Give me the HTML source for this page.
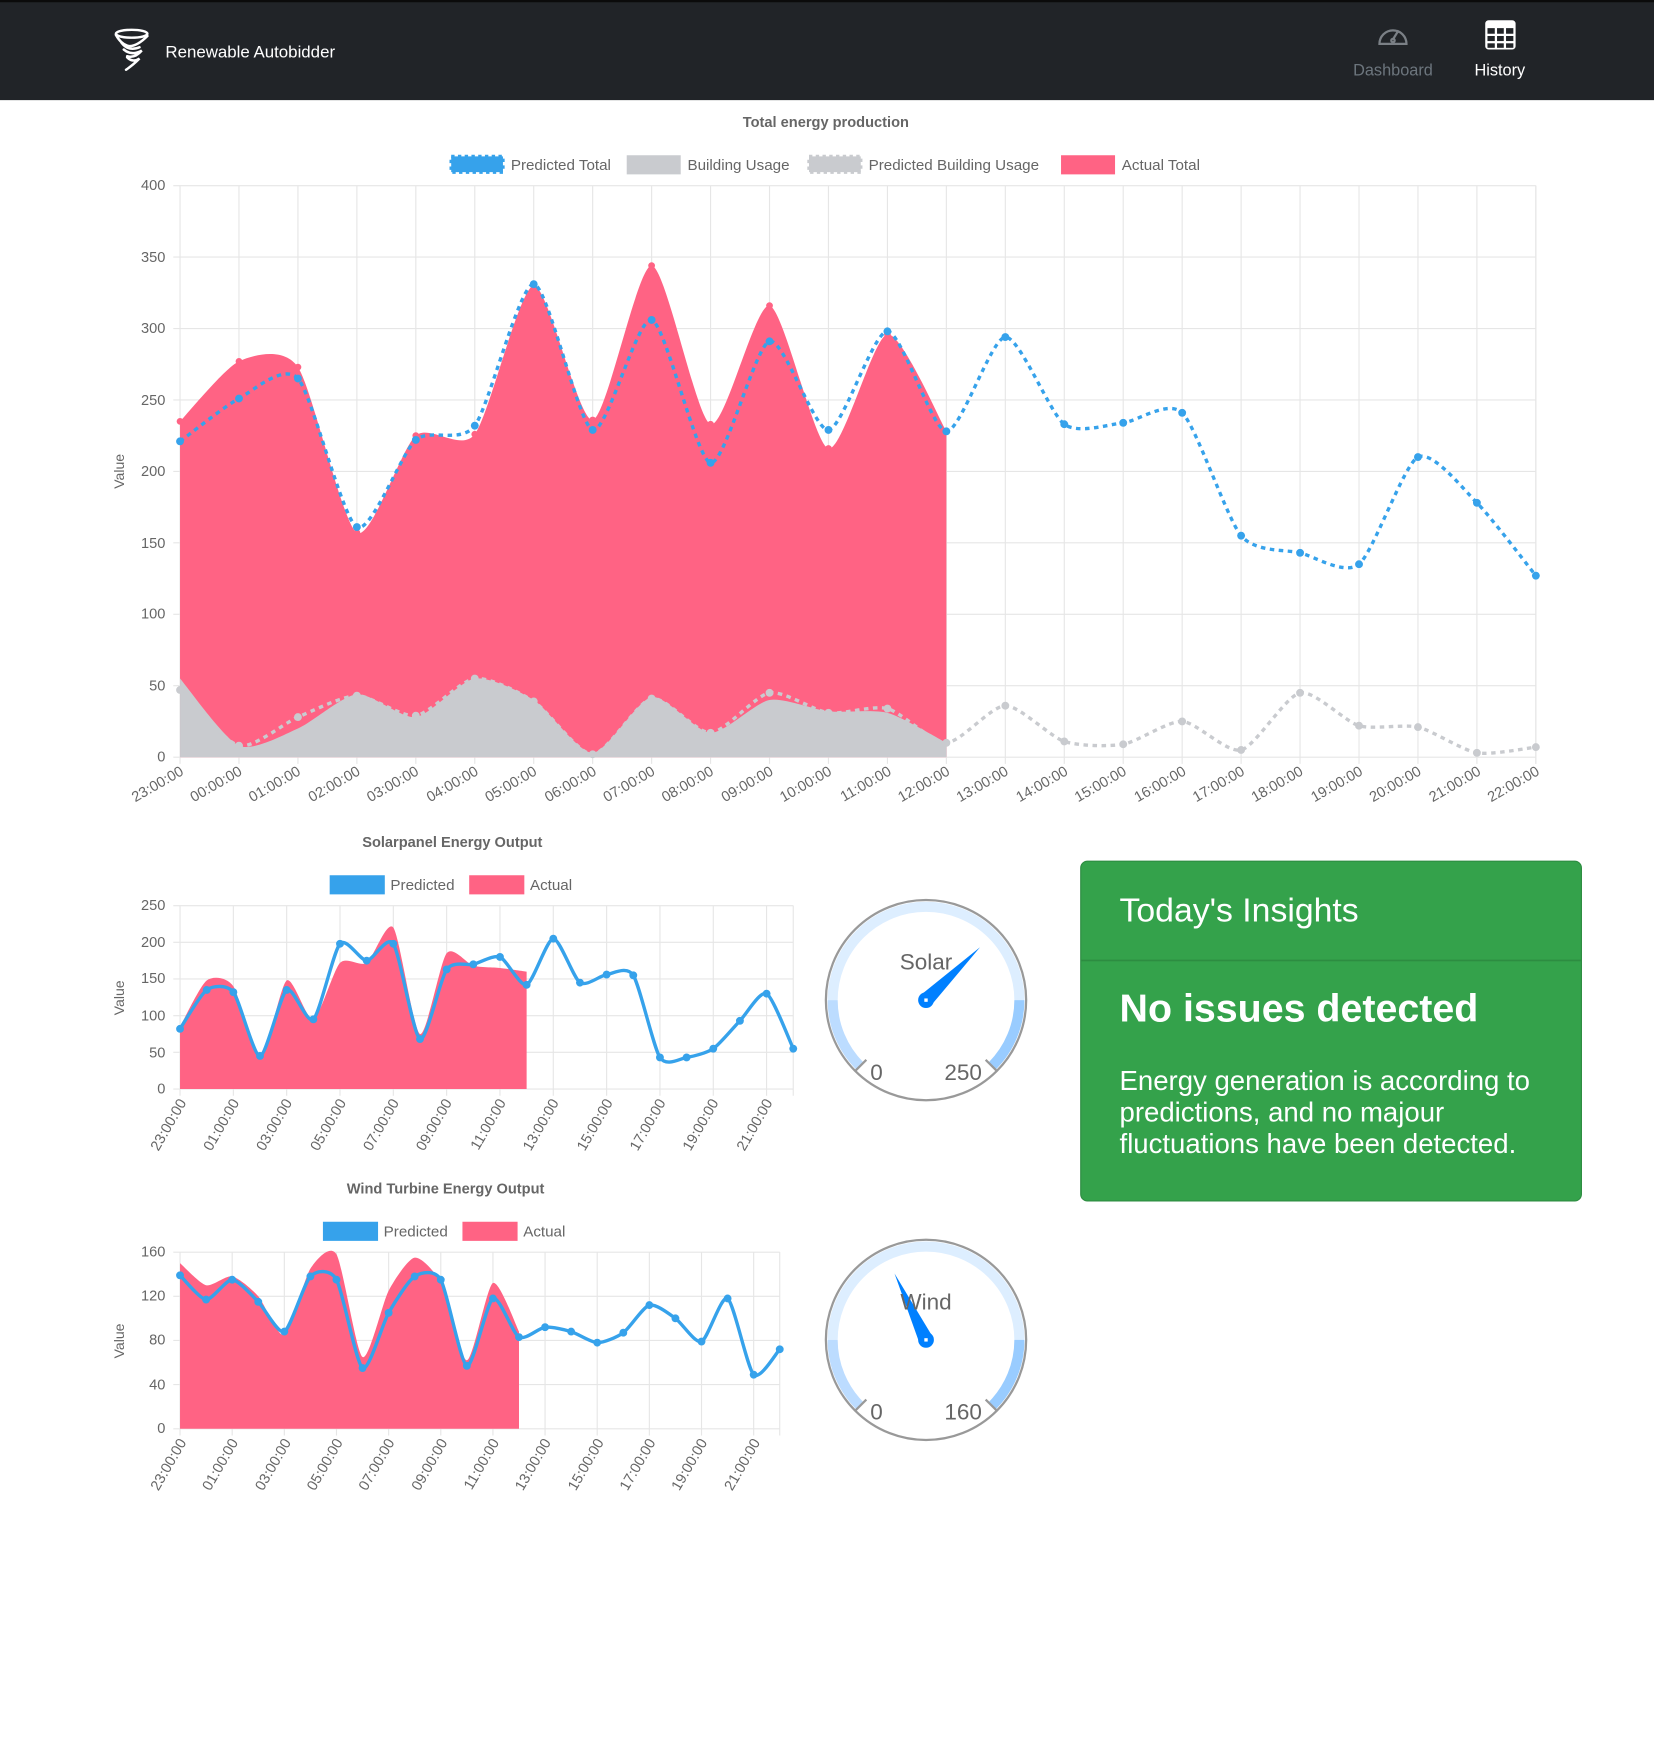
<!DOCTYPE html>
<html><head><meta charset="utf-8"><style>
html,body{margin:0;padding:0;background:#fff;width:1654px;height:1764px;overflow:hidden}
svg{display:block;font-family:"Liberation Sans",Arial,sans-serif}
</style></head><body>
<svg id="s" width="1654" height="1764" viewBox="0 0 1470 1568" preserveAspectRatio="none" xmlns="http://www.w3.org/2000/svg">
<rect x="0" y="0" width="1470" height="89" fill="#212428"/>
<rect x="0" y="0" width="1470" height="2" fill="#0b0b0b"/>
<g fill="none" stroke="#fff" stroke-width="2.2" stroke-linecap="round">
<ellipse cx="117" cy="30" rx="14" ry="3.5"/>
<path d="M103 31 Q108 40 115 41 Q122 41 131 32"/>
<path d="M108 38 Q114 46 124 42"/>
<path d="M110 44 Q117 50 126 45 Q120 52 113 50"/>
<path d="M113 51 Q118 56 124 52 Q118 58 112 62"/>
</g>
<text x="147" y="51" fill="#fff" font-size="15">Renewable Autobidder</text>
<g fill="none" stroke="#7b8086" stroke-width="2">
<path d="M1226 39 A12 12 0 1 1 1250 39 Z"/>
<path d="M1238 35 L1243 27"/><circle cx="1238" cy="36" r="1.5"/>
</g>
<text x="1238" y="67" text-anchor="middle" fill="#6c757d" font-size="14.5">Dashboard</text>
<g><rect x="1320" y="18" width="27" height="26" rx="3" fill="#fff"/>
<g fill="#212428"><rect x="1322" y="25" width="6.5" height="5"/><rect x="1330.5" y="25" width="6" height="5"/><rect x="1338.5" y="25" width="6.5" height="5"/>
<rect x="1322" y="32" width="6.5" height="4.5"/><rect x="1330.5" y="32" width="6" height="4.5"/><rect x="1338.5" y="32" width="6.5" height="4.5"/>
<rect x="1322" y="38.5" width="6.5" height="4"/><rect x="1330.5" y="38.5" width="6" height="4"/><rect x="1338.5" y="38.5" width="6.5" height="4"/></g></g>
<text x="1333" y="67" text-anchor="middle" fill="#fff" font-size="14.5">History</text>

<text x="734" y="113" text-anchor="middle" fill="#666" font-size="13" font-weight="bold">Total energy production</text>
<rect x="401" y="139" width="46" height="14" fill="#36a2eb" stroke="#36a2eb" stroke-width="3" stroke-dasharray="3,3"/>
<text x="454" y="151" fill="#666" font-size="13.5">Predicted Total</text>
<rect x="557" y="138" width="48" height="17" fill="#c9cbcf"/>
<text x="611" y="151" fill="#666" font-size="13.5">Building Usage</text>
<rect x="719" y="139" width="46" height="14" fill="#c9cbcf" stroke="#c9cbcf" stroke-width="3" stroke-dasharray="3,3"/>
<text x="772" y="151" fill="#666" font-size="13.5">Predicted Building Usage</text>
<rect x="943" y="138" width="48" height="17" fill="#ff6384"/>
<text x="997" y="151" fill="#666" font-size="13.5">Actual Total</text>
<g fill="#666" font-size="13" text-anchor="end">
<text x="147" y="169">400</text><text x="147" y="233">350</text><text x="147" y="296">300</text><text x="147" y="360">250</text><text x="147" y="423">200</text><text x="147" y="487">150</text><text x="147" y="550">100</text><text x="147" y="614">50</text><text x="147" y="677">0</text>
</g>
<text transform="translate(110,419) rotate(-90)" text-anchor="middle" fill="#666" font-size="12.5">Value</text>
<g fill="#666" font-size="13" text-anchor="end">
<text transform="translate(164,688) rotate(-30)">23:00:00</text>
<text transform="translate(216,688) rotate(-30)">00:00:00</text>
<text transform="translate(268,688) rotate(-30)">01:00:00</text>
<text transform="translate(321,688) rotate(-30)">02:00:00</text>
<text transform="translate(373,688) rotate(-30)">03:00:00</text>
<text transform="translate(426,688) rotate(-30)">04:00:00</text>
<text transform="translate(478,688) rotate(-30)">05:00:00</text>
<text transform="translate(531,688) rotate(-30)">06:00:00</text>
<text transform="translate(583,688) rotate(-30)">07:00:00</text>
<text transform="translate(635,688) rotate(-30)">08:00:00</text>
<text transform="translate(688,688) rotate(-30)">09:00:00</text>
<text transform="translate(740,688) rotate(-30)">10:00:00</text>
<text transform="translate(793,688) rotate(-30)">11:00:00</text>
<text transform="translate(845,688) rotate(-30)">12:00:00</text>
<text transform="translate(897,688) rotate(-30)">13:00:00</text>
<text transform="translate(950,688) rotate(-30)">14:00:00</text>
<text transform="translate(1002,688) rotate(-30)">15:00:00</text>
<text transform="translate(1055,688) rotate(-30)">16:00:00</text>
<text transform="translate(1107,688) rotate(-30)">17:00:00</text>
<text transform="translate(1159,688) rotate(-30)">18:00:00</text>
<text transform="translate(1212,688) rotate(-30)">19:00:00</text>
<text transform="translate(1264,688) rotate(-30)">20:00:00</text>
<text transform="translate(1317,688) rotate(-30)">21:00:00</text>
<text transform="translate(1369,688) rotate(-30)">22:00:00</text>
</g>

<text x="402" y="753" text-anchor="middle" fill="#666" font-size="13" font-weight="bold">Solarpanel Energy Output</text>
<rect x="293" y="778" width="49" height="17" fill="#36a2eb"/><text x="347" y="791" fill="#666" font-size="13.5">Predicted</text>
<rect x="417" y="778" width="49" height="17" fill="#ff6384"/><text x="471" y="791" fill="#666" font-size="13.5">Actual</text>
<g fill="#666" font-size="13" text-anchor="end">
<text x="147" y="809">250</text><text x="147" y="842">200</text><text x="147" y="874">150</text><text x="147" y="907">100</text><text x="147" y="940">50</text><text x="147" y="972">0</text>
</g>
<text transform="translate(110,887) rotate(-90)" text-anchor="middle" fill="#666" font-size="12.5">Value</text>
<g fill="#666" font-size="13" text-anchor="end">
<text transform="translate(166,980) rotate(-60)">23:00:00</text>
<text transform="translate(213,980) rotate(-60)">01:00:00</text>
<text transform="translate(260,980) rotate(-60)">03:00:00</text>
<text transform="translate(308,980) rotate(-60)">05:00:00</text>
<text transform="translate(355,980) rotate(-60)">07:00:00</text>
<text transform="translate(402,980) rotate(-60)">09:00:00</text>
<text transform="translate(450,980) rotate(-60)">11:00:00</text>
<text transform="translate(497,980) rotate(-60)">13:00:00</text>
<text transform="translate(545,980) rotate(-60)">15:00:00</text>
<text transform="translate(592,980) rotate(-60)">17:00:00</text>
<text transform="translate(639,980) rotate(-60)">19:00:00</text>
<text transform="translate(687,980) rotate(-60)">21:00:00</text>
</g>

<text x="396" y="1061" text-anchor="middle" fill="#666" font-size="13" font-weight="bold">Wind Turbine Energy Output</text>
<rect x="287" y="1086" width="49" height="17" fill="#36a2eb"/><text x="341" y="1099" fill="#666" font-size="13.5">Predicted</text>
<rect x="411" y="1086" width="49" height="17" fill="#ff6384"/><text x="465" y="1099" fill="#666" font-size="13.5">Actual</text>
<g fill="#666" font-size="13" text-anchor="end">
<text x="147" y="1117">160</text><text x="147" y="1156">120</text><text x="147" y="1195">80</text><text x="147" y="1235">40</text><text x="147" y="1274">0</text>
</g>
<text transform="translate(110,1192) rotate(-90)" text-anchor="middle" fill="#666" font-size="12.5">Value</text>
<g fill="#666" font-size="13" text-anchor="end">
<text transform="translate(166,1282) rotate(-60)">23:00:00</text>
<text transform="translate(212,1282) rotate(-60)">01:00:00</text>
<text transform="translate(259,1282) rotate(-60)">03:00:00</text>
<text transform="translate(305,1282) rotate(-60)">05:00:00</text>
<text transform="translate(351,1282) rotate(-60)">07:00:00</text>
<text transform="translate(398,1282) rotate(-60)">09:00:00</text>
<text transform="translate(444,1282) rotate(-60)">11:00:00</text>
<text transform="translate(490,1282) rotate(-60)">13:00:00</text>
<text transform="translate(537,1282) rotate(-60)">15:00:00</text>
<text transform="translate(583,1282) rotate(-60)">17:00:00</text>
<text transform="translate(629,1282) rotate(-60)">19:00:00</text>
<text transform="translate(676,1282) rotate(-60)">21:00:00</text>
</g>

<g id="dyn"></g>

<g id="g1"></g>
<text x="823" y="862" text-anchor="middle" fill="#666" font-size="20">Solar</text>
<text x="779" y="960" text-anchor="middle" fill="#666" font-size="20">0</text>
<text x="856" y="960" text-anchor="middle" fill="#666" font-size="20">250</text>
<g id="g2"></g>
<text x="823" y="1164" text-anchor="middle" fill="#666" font-size="20">Wind</text>
<text x="779" y="1262" text-anchor="middle" fill="#666" font-size="20">0</text>
<text x="856" y="1262" text-anchor="middle" fill="#666" font-size="20">160</text>

<rect x="960.5" y="765.5" width="445" height="302" rx="6" fill="#34a24b" stroke="#2d8c41"/>
<rect x="961" y="853" width="444" height="1.5" fill="#2d8c41"/>
<text x="995" y="819" fill="#fff" font-size="30">Today's Insights</text>
<text x="995" y="908" fill="#fff" font-size="35" font-weight="bold">No issues detected</text>
<text x="995" y="969" fill="#fff" font-size="24.5">Energy generation is according to</text>
<text x="995" y="997" fill="#fff" font-size="24.5">predictions, and no majour</text>
<text x="995" y="1025" fill="#fff" font-size="24.5">fluctuations have been detected.</text>
</svg>
<script>
var NS="http://www.w3.org/2000/svg";
function el(p,t,a){var e=document.createElementNS(NS,t);for(var k in a)e.setAttribute(k,a[k]);p.appendChild(e);return e;}
var dyn=document.getElementById('dyn');
function pts(d,x0,dx,y0,sc){return d.map(function(v,i){return [x0+i*dx,y0-v*sc];});}
function sm(p){var k=0.12,d='M'+p[0][0]+' '+p[0][1];for(var i=0;i<p.length-1;i++){var a=p[i-1]||p[i],b=p[i],c=p[i+1],e=p[i+2]||c;
d+=' C'+(b[0]+(c[0]-a[0])*k)+' '+(b[1]+(c[1]-a[1])*k)+' '+(c[0]-(e[0]-b[0])*k)+' '+(c[1]-(e[1]-b[1])*k)+' '+c[0]+' '+c[1];}return d;}
function fill(p,y0,col){el(dyn,'path',{d:sm(p)+' L'+p[p.length-1][0]+' '+y0+' L'+p[0][0]+' '+y0+' Z',fill:col});}
function line(p,col,w,dash){var a={d:sm(p),fill:'none',stroke:col,'stroke-width':w};if(dash)a['stroke-dasharray']=dash;el(dyn,'path',a);}
function dots(p,col,r){p.forEach(function(q){el(dyn,'circle',{cx:q[0],cy:q[1],r:r,fill:col});});}
function grid(x0,x1,y0,y1,n,step,ny){var dx=(x1-x0)/n;for(var i=0;i<=n;i+=step){var x=x0+dx*i;el(dyn,'line',{x1:x,x2:x,y1:y1,y2:y0+6,stroke:'#e6e6e6'});}
el(dyn,'line',{x1:x1,x2:x1,y1:y1,y2:y0+6,stroke:'#e6e6e6'});
for(var j=0;j<=ny;j++){var y=y0-(y0-y1)*j/ny;el(dyn,'line',{x1:x0-6,x2:x1,y1:y,y2:y,stroke:'#e6e6e6'});}}
grid(160,1365,673,165,23,1,8);
var dx=(1365-160)/23, sc=508/400;
var pt=[221,251,265,161,222,232,331,229,306,206,291,229,298,228,294,233,234,241,155,143,135,210,178,127];
var at=[235,277,273,157,225,226,330,236,344,233,316,216,296,228];
var bu=[55,8,20,44,28,55,40,3,42,17,40,32,31,10];
var pb=[47,8,28,43,29,55,39,2,41,17,45,31,34,10,36,11,9,25,5,45,22,21,3,7];
fill(pts(at,160,dx,673,sc),673,'#ff6384');dots(pts(at,160,dx,673,sc),'#ff6384',3);
fill(pts(bu,160,dx,673,sc),673,'#c9cbcf');
line(pts(pb,160,dx,673,sc),'#c9cbcf',3,'4,4');dots(pts(pb,160,dx,673,sc),'#c9cbcf',3.5);
line(pts(pt,160,dx,673,sc),'#36a2eb',3,'4,4');dots(pts(pt,160,dx,673,sc),'#36a2eb',3.5);
grid(160,705,968,805,23,2,5);
var sdx=(705-160)/23, ssc=163/250;
var sp=[82,135,132,45,135,95,198,175,198,68,163,170,180,142,205,145,156,155,43,43,55,93,130,55];
var sa=[85,148,140,42,148,95,172,172,220,75,185,168,165,160];
fill(pts(sa,160,sdx,968,ssc),968,'#ff6384');
line(pts(sp,160,sdx,968,ssc),'#36a2eb',3);dots(pts(sp,160,sdx,968,ssc),'#36a2eb',3.5);
grid(160,693,1270,1113,23,2,4);
var wdx=(693-160)/23, wsc=157/160;
var wp=[139,117,135,115,88,138,135,55,105,138,135,57,118,83,92,88,78,87,112,100,79,118,49,72];
var wa=[150,130,138,120,85,145,158,65,125,155,132,62,132,88];
fill(pts(wa,160,wdx,1270,wsc),1270,'#ff6384');
line(pts(wp,160,wdx,1270,wsc),'#36a2eb',3);dots(pts(wp,160,wdx,1270,wsc),'#36a2eb',3.5);
function arc(cx,cy,r,a0,a1){var p0=[cx+r*Math.cos(a0),cy+r*Math.sin(a0)],p1=[cx+r*Math.cos(a1),cy+r*Math.sin(a1)];var lg=Math.abs(a1-a0)>Math.PI?1:0;return 'M'+p0[0]+' '+p0[1]+' A'+r+' '+r+' 0 '+lg+' 1 '+p1[0]+' '+p1[1];}
function gauge(id,cx,cy,tip){var g=document.getElementById(id),R=89,D=Math.PI/180;
el(g,'circle',{cx:cx,cy:cy,r:R,fill:'#fff',stroke:'#999','stroke-width':2});
el(g,'path',{d:arc(cx,cy,R-6,180*D,360*D),fill:'none',stroke:'#ddeeff','stroke-width':9});
el(g,'path',{d:arc(cx,cy,R-6,135*D,180*D),fill:'none',stroke:'#bcdcff','stroke-width':9});
el(g,'path',{d:arc(cx,cy,R-6,0,45*D),fill:'none',stroke:'#99ccff','stroke-width':9});
[135,45].forEach(function(a){el(g,'line',{x1:cx+(R-14)*Math.cos(a*D),y1:cy+(R-14)*Math.sin(a*D),x2:cx+R*Math.cos(a*D),y2:cy+R*Math.sin(a*D),stroke:'#999','stroke-width':2});});
var ang=Math.atan2(tip[1]-cy,tip[0]-cx),w=6.5,px=-Math.sin(ang)*w,py=Math.cos(ang)*w;
el(g,'path',{d:'M'+(cx+px)+' '+(cy+py)+' L'+tip[0]+' '+tip[1]+' L'+(cx-px)+' '+(cy-py)+' Z',fill:'#0080ff'});
el(g,'circle',{cx:cx,cy:cy,r:7,fill:'#0080ff'});el(g,'rect',{x:cx-1.5,y:cy-1.5,width:3,height:3,fill:'#fff'});}
gauge('g1',823,889,[871,842]);
gauge('g2',823,1191,[795,1132]);
</script>
</body></html>
